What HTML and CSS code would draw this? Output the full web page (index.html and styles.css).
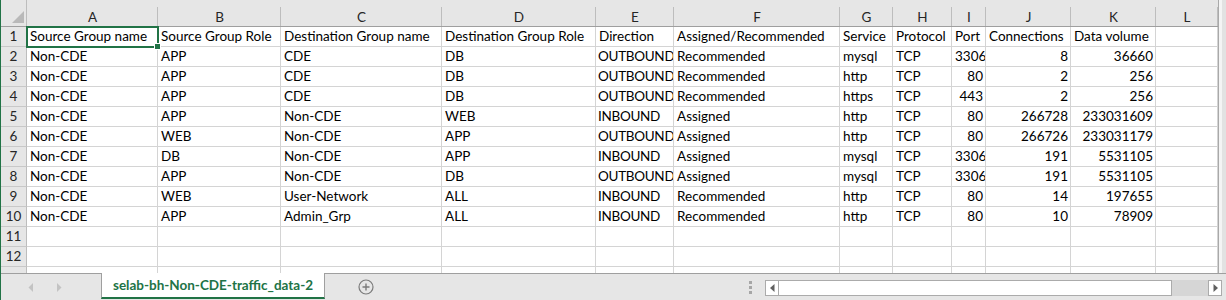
FILE: index.html
```html
<!DOCTYPE html>
<html>
<head>
<meta charset="utf-8">
<link rel="stylesheet" href="styles.css">
</head>
<body>
<div class="app">
  <div class="sheet">
    <div class="grid">
      <div class="corner"><svg width="12" height="12" viewBox="0 0 12 12"><path d="M12 0 L12 12 L0 12 Z" fill="#b9b9b9"/></svg></div>
      <div class="ch">A</div><div class="ch">B</div><div class="ch">C</div><div class="ch">D</div><div class="ch">E</div><div class="ch">F</div><div class="ch">G</div><div class="ch">H</div><div class="ch">I</div><div class="ch">J</div><div class="ch">K</div><div class="ch">L</div>

      <div class="rh">1</div><div class="c active">Source Group name</div><div class="c">Source Group Role</div><div class="c">Destination Group name</div><div class="c">Destination Group Role</div><div class="c">Direction</div><div class="c">Assigned/Recommended</div><div class="c">Service</div><div class="c">Protocol</div><div class="c">Port</div><div class="c">Connections</div><div class="c">Data volume</div><div class="c"></div>

      <div class="rh">2</div><div class="c">Non-CDE</div><div class="c">APP</div><div class="c">CDE</div><div class="c">DB</div><div class="c dir">OUTBOUND</div><div class="c">Recommended</div><div class="c">mysql</div><div class="c">TCP</div><div class="c n">3306</div><div class="c n">8</div><div class="c n">36660</div><div class="c"></div>

      <div class="rh">3</div><div class="c">Non-CDE</div><div class="c">APP</div><div class="c">CDE</div><div class="c">DB</div><div class="c dir">OUTBOUND</div><div class="c">Recommended</div><div class="c">http</div><div class="c">TCP</div><div class="c n">80</div><div class="c n">2</div><div class="c n">256</div><div class="c"></div>

      <div class="rh">4</div><div class="c">Non-CDE</div><div class="c">APP</div><div class="c">CDE</div><div class="c">DB</div><div class="c dir">OUTBOUND</div><div class="c">Recommended</div><div class="c">https</div><div class="c">TCP</div><div class="c n">443</div><div class="c n">2</div><div class="c n">256</div><div class="c"></div>

      <div class="rh">5</div><div class="c">Non-CDE</div><div class="c">APP</div><div class="c">Non-CDE</div><div class="c">WEB</div><div class="c dir">INBOUND</div><div class="c">Assigned</div><div class="c">http</div><div class="c">TCP</div><div class="c n">80</div><div class="c n">266728</div><div class="c n">233031609</div><div class="c"></div>

      <div class="rh">6</div><div class="c">Non-CDE</div><div class="c">WEB</div><div class="c">Non-CDE</div><div class="c">APP</div><div class="c dir">OUTBOUND</div><div class="c">Assigned</div><div class="c">http</div><div class="c">TCP</div><div class="c n">80</div><div class="c n">266726</div><div class="c n">233031179</div><div class="c"></div>

      <div class="rh">7</div><div class="c">Non-CDE</div><div class="c">DB</div><div class="c">Non-CDE</div><div class="c">APP</div><div class="c dir">INBOUND</div><div class="c">Assigned</div><div class="c">mysql</div><div class="c">TCP</div><div class="c n">3306</div><div class="c n">191</div><div class="c n">5531105</div><div class="c"></div>

      <div class="rh">8</div><div class="c">Non-CDE</div><div class="c">APP</div><div class="c">Non-CDE</div><div class="c">DB</div><div class="c dir">OUTBOUND</div><div class="c">Assigned</div><div class="c">mysql</div><div class="c">TCP</div><div class="c n">3306</div><div class="c n">191</div><div class="c n">5531105</div><div class="c"></div>

      <div class="rh">9</div><div class="c">Non-CDE</div><div class="c">WEB</div><div class="c">User-Network</div><div class="c">ALL</div><div class="c dir">INBOUND</div><div class="c">Recommended</div><div class="c">http</div><div class="c">TCP</div><div class="c n">80</div><div class="c n">14</div><div class="c n">197655</div><div class="c"></div>

      <div class="rh">10</div><div class="c">Non-CDE</div><div class="c">APP</div><div class="c">Admin_Grp</div><div class="c">ALL</div><div class="c dir">INBOUND</div><div class="c">Recommended</div><div class="c">http</div><div class="c">TCP</div><div class="c n">80</div><div class="c n">10</div><div class="c n">78909</div><div class="c"></div>

      <div class="rh">11</div><div class="c"></div><div class="c"></div><div class="c"></div><div class="c"></div><div class="c"></div><div class="c"></div><div class="c"></div><div class="c"></div><div class="c"></div><div class="c"></div><div class="c"></div><div class="c"></div>

      <div class="rh">12</div><div class="c"></div><div class="c"></div><div class="c"></div><div class="c"></div><div class="c"></div><div class="c"></div><div class="c"></div><div class="c"></div><div class="c"></div><div class="c"></div><div class="c"></div><div class="c"></div>

      <div class="rh"></div><div class="c"></div><div class="c"></div><div class="c"></div><div class="c"></div><div class="c"></div><div class="c"></div><div class="c"></div><div class="c"></div><div class="c"></div><div class="c"></div><div class="c"></div><div class="c"></div>
    </div>
    <div class="vscroll"></div>
  </div>
  <div class="tabbar">
    <div class="nav">
      <svg width="6" height="9" viewBox="0 0 6 9"><path d="M5 0 L5 9 L0.5 4.5 Z" fill="#c3c3c3"/></svg>
      <svg width="6" height="9" viewBox="0 0 6 9"><path d="M1 0 L1 9 L5.5 4.5 Z" fill="#c3c3c3"/></svg>
    </div>
    <div class="tab">selab-bh-Non-CDE-traffic_data-2</div>
    <div class="add">
      <svg width="16" height="16" viewBox="0 0 16 16"><circle cx="8" cy="8" r="7" fill="none" stroke="#7b7b7b" stroke-width="1.2"/><path d="M8 4.5 V11.5 M4.5 8 H11.5" stroke="#7b7b7b" stroke-width="1.4"/></svg>
    </div>
    <div class="spacer"></div>
    <div class="dots"><span></span><span></span><span></span></div>
    <div class="hscroll">
      <div class="btn"><svg width="5" height="8" viewBox="0 0 5 8"><path d="M4.5 0 L4.5 8 L0 4 Z" fill="#606060"/></svg></div>
      <div class="thumb"></div>
      <div class="track"></div>
      <div class="btn"><svg width="5" height="8" viewBox="0 0 5 8"><path d="M0.5 0 L0.5 8 L5 4 Z" fill="#606060"/></svg></div>
    </div>
  </div>
</div>
</body>
</html>
```

FILE: styles.css
```css
html, body {
  margin: 0;
  padding: 0;
  background: #ffffff;
}

body {
  font-family: "Lato", "Liberation Sans", sans-serif;
  font-size: 13.5px;
  color: #000;
  width: 1226px;
  height: 300px;
  overflow: hidden;
}

.app {
  border-left: 1px solid #217346;
  height: 300px;
  box-sizing: border-box;
  display: flex;
  flex-direction: column;
}

.sheet {
  display: flex;
  height: 273px;
  overflow: hidden;
}

.grid {
  display: grid;
  grid-template-columns: 26px 131px 123px 161px 154px 78px 166px 53px 59px 34px 85px 85px 62px;
  grid-template-rows: 27px;
  grid-auto-rows: 20px;
  width: 1217px;
  flex: none;
}

.corner {
  background: #e6e6e6;
  border-right: 1px solid #bdbdbd;
  border-bottom: 1px solid #9f9f9f;
  box-sizing: border-box;
  display: flex;
  align-items: flex-end;
  justify-content: flex-end;
  padding: 0 2px 3px 0;
}

.ch {
  background: #e6e6e6 linear-gradient(#bdbdbd, #bdbdbd) right bottom / 1px 19px no-repeat;
  border-bottom: 1px solid #9f9f9f;
  box-sizing: border-box;
  text-align: center;
  padding-top: 8px;
  line-height: 18px;
  color: #262626;
}

.rh {
  background: #e6e6e6;
  border-right: 1px solid #bdbdbd;
  border-bottom: 1px solid #c8c8c8;
  box-sizing: border-box;
  text-align: center;
  line-height: 19px;
  color: #262626;
}

.c {
  border-right: 1px solid #d4d4d4;
  border-bottom: 1px solid #d4d4d4;
  box-sizing: border-box;
  padding: 0 3px;
  line-height: 19px;
  white-space: nowrap;
  overflow: hidden;
}

.c.dir {
  padding-left: 2px;
  letter-spacing: -0.3px;
}

.c.n {
  text-align: right;
  padding-right: 2px;
}

.c.active {
  position: relative;
  overflow: visible;
  outline: 2px solid #217346;
  outline-offset: -1px;
  z-index: 1;
}

.c.active::after {
  content: "";
  position: absolute;
  right: -4px;
  bottom: -4px;
  width: 5px;
  height: 5px;
  background: #217346;
  border: 1px solid #ffffff;
}

.vscroll {
  flex: 1;
  border-left: 1px solid #a9a9a9;
  background: linear-gradient(to right, #f4f4f4 0 3px, #e2e2e2 3px);
}

.tabbar {
  height: 27px;
  background: #e6e6e6;
  border-top: 1px solid #9f9f9f;
  box-sizing: border-box;
  display: flex;
  align-items: flex-start;
}

.nav {
  width: 100px;
  height: 26px;
  display: flex;
  align-items: center;
  gap: 22px;
  padding-left: 27px;
  box-sizing: border-box;
}

.tab {
  width: 222px;
  height: 24px;
  margin-top: -1px;
  background: #ffffff;
  border-left: 1px solid #9f9f9f;
  border-right: 1px solid #9f9f9f;
  border-bottom: 2px solid #217346;
  box-sizing: content-box;
  color: #217346;
  font-weight: bold;
  font-size: 13.5px;
  text-align: center;
  line-height: 25px;
  white-space: nowrap;
}

.add {
  margin-left: 33px;
  height: 26px;
  display: flex;
  align-items: center;
}

.spacer {
  flex: 1;
}

.dots {
  width: 3px;
  height: 26px;
  display: flex;
  flex-direction: column;
  justify-content: center;
  gap: 2px;
  margin-right: 13px;
}

.dots span {
  width: 3px;
  height: 3px;
  background: #a6a6a6;
}

.hscroll {
  display: flex;
  height: 16px;
  margin-top: 6px;
  margin-right: 4px;
}

.hscroll .btn {
  width: 14px;
  height: 16px;
  box-sizing: border-box;
  background: #ffffff;
  border: 1px solid #ababab;
  display: flex;
  align-items: center;
  justify-content: center;
}

.hscroll .thumb {
  width: 393px;
  height: 16px;
  box-sizing: border-box;
  background: #ffffff;
  border: 1px solid #ababab;
  border-left: none;
}

.hscroll .track {
  width: 36px;
  height: 16px;
  background: #d6d6d6;
}
```
